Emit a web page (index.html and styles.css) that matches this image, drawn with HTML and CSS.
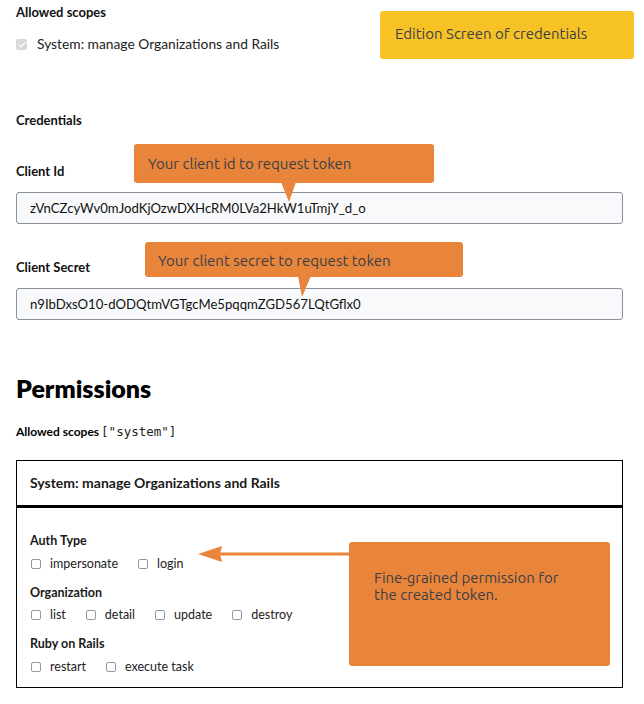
FILE: index.html
```html
<!DOCTYPE html>
<html>
<head>
<meta charset="utf-8">
<link rel="stylesheet" href="styles.css">
</head>
<body>
<div class="page">
  <div class="label first">Allowed scopes</div>
  <label class="check-row scope-row"><input type="checkbox" class="cb" checked disabled><span>System: manage Organizations and Rails</span></label>

  <div class="label credentials">Credentials</div>
  <div class="label field-label id-label">Client Id</div>
  <div class="input">zVnCZcyWv0mJodKjOzwDXHcRM0LVa2HkW1uTmjY_d_o</div>
  <div class="label field-label secret-label">Client Secret</div>
  <div class="input">n9IbDxsO10-dODQtmVGTgcMe5pqqmZGD567LQtGflx0</div>

  <h1 class="title">Permissions</h1>
  <div class="scopes"><strong>Allowed scopes</strong><code>["system"]</code></div>

  <div class="box">
    <div class="box-head">System: manage Organizations and Rails</div>
    <div class="box-body">
      <div class="group-title">Auth Type</div>
      <div class="opts">
        <label class="opt"><input type="checkbox" class="cb"><span>impersonate</span></label>
        <label class="opt"><input type="checkbox" class="cb"><span>login</span></label>
      </div>
      <div class="group-title">Organization</div>
      <div class="opts">
        <label class="opt"><input type="checkbox" class="cb"><span>list</span></label>
        <label class="opt"><input type="checkbox" class="cb"><span>detail</span></label>
        <label class="opt"><input type="checkbox" class="cb"><span>update</span></label>
        <label class="opt"><input type="checkbox" class="cb"><span>destroy</span></label>
      </div>
      <div class="group-title">Ruby on Rails</div>
      <div class="opts">
        <label class="opt"><input type="checkbox" class="cb"><span>restart</span></label>
        <label class="opt"><input type="checkbox" class="cb"><span>execute task</span></label>
      </div>
    </div>
  </div>

  <div class="note note-yellow">Edition Screen of credentials</div>
  <div class="note note-id">Your client id to request token</div>
  <svg class="ptr ptr-id" width="16" height="21" viewBox="0 0 16 21"><polygon points="0,0 15,0 8,20" fill="#e8853a"/></svg>
  <div class="note note-secret">Your client secret to request token</div>
  <svg class="ptr ptr-secret" width="14" height="22" viewBox="0 0 14 22"><polygon points="0,0 13,0 4,21" fill="#e8853a"/></svg>
  <div class="note note-perm">Fine-grained permission for<br>the created token.</div>
  <svg class="arrow" width="152" height="18" viewBox="0 0 152 18"><line x1="20" y1="9" x2="152" y2="9" stroke="#e8853a" stroke-width="3"/><polygon points="0,9 24,1 22,9 24,17" fill="#e8853a"/></svg>
</div>
</body>
</html>
```
FILE: styles.css
```css
* { box-sizing: border-box; }
html, body { margin: 0; padding: 0; background: #fff; }
body {
  font-family: Lato, "Noto Sans", sans-serif;
  font-size: 13px;
  color: #1a1a1a;
}
.page {
  position: relative;
  padding: 2px 21px 0 16px;
  width: 644px;
  height: 704px;
}
.label {
  font-weight: 700;
  line-height: 20px;
  color: #111;
}
.check-row {
  display: flex;
  align-items: center;
  gap: 10px;
  margin-top: 12px;
  line-height: 20px;
  font-size: 13.8px;
  color: #222;
}
.credentials { margin-top: 56px; }
.id-label { margin-top: 31px; }
.secret-label { margin-top: 33px; }
.input {
  margin-top: 11px;
  height: 32px;
  border: 1px solid #8d909c;
  border-radius: 3px;
  background: #f8f9fb;
  padding: 0 13px;
  line-height: 30px;
  font-size: 13.15px;
  color: #111;
}
.title {
  margin: 53px 0 0;
  font-size: 25px;
  line-height: 30px;
  font-weight: 800;
  color: #000;
}
.scopes {
  margin-top: 19px;
  line-height: 20px;
  font-size: 12px;
  color: #000;
}
.scopes code {
  font-family: "DejaVu Sans Mono", monospace;
  font-size: 12.5px;
  margin-left: 2px;
  color: #222;
}
.box {
  margin-top: 18px;
  border: 1px solid #000;
  height: 228px;
}
.box-head {
  font-weight: 700;
  font-size: 14px;
  line-height: 20px;
  padding: 12px 13px;
  border-bottom: 3px solid #000;
  height: 47px;
}
.box-body {
  padding: 23px 13px 12px;
}
.group-title {
  font-weight: 700;
  line-height: 20px;
  font-size: 12.5px;
  margin-top: 9px;
}
.group-title:first-child { margin-top: 0; }
.opts {
  display: flex;
  gap: 19px;
  margin-top: 2.5px;
  line-height: 20px;
  font-size: 12.5px;
  color: #222;
}
.opt {
  display: flex;
  align-items: center;
  gap: 9px;
}
.cb {
  appearance: none;
  -webkit-appearance: none;
  margin: 0 0 0 1px;
  width: 10px;
  height: 10px;
  border: 1.5px solid #9596a3;
  border-radius: 2px;
  background: #fff;
}
.scope-row .cb {
  width: 11px;
  height: 11px;
  margin: 0;
  border: none;
  background: #d8d8d8;
  position: relative;
}
.scope-row .cb::after {
  content: "";
  position: absolute;
  left: 3.5px;
  top: 1.5px;
  width: 3px;
  height: 6px;
  border: solid #fff;
  border-width: 0 1.5px 1.5px 0;
  transform: rotate(45deg);
}
.note {
  position: absolute;
  font-family: Ubuntu, "Noto Sans", sans-serif;
  color: #3c3f47;
  border-radius: 3px;
  font-size: 15px;
  line-height: 17px;
}
.note-yellow {
  left: 380px; top: 11px; width: 254px; height: 48px;
  background: #f6c226;
  padding: 14px 15px;
}
.note-id {
  left: 134px; top: 144px; width: 300px; height: 39px;
  background: #e8853a;
  padding: 11px 14px;
}
.note-secret {
  left: 145px; top: 242px; width: 318px; height: 35px;
  background: #e8853a;
  padding: 10px 13px;
}
.note-perm {
  left: 349px; top: 542px; width: 261px; height: 124px;
  background: #e8853a;
  padding: 27px 25px;
}
.ptr { position: absolute; }
.ptr-id { left: 281px; top: 182px; }
.ptr-secret { left: 298px; top: 276px; }
.arrow { position: absolute; left: 198px; top: 545px; }
```
